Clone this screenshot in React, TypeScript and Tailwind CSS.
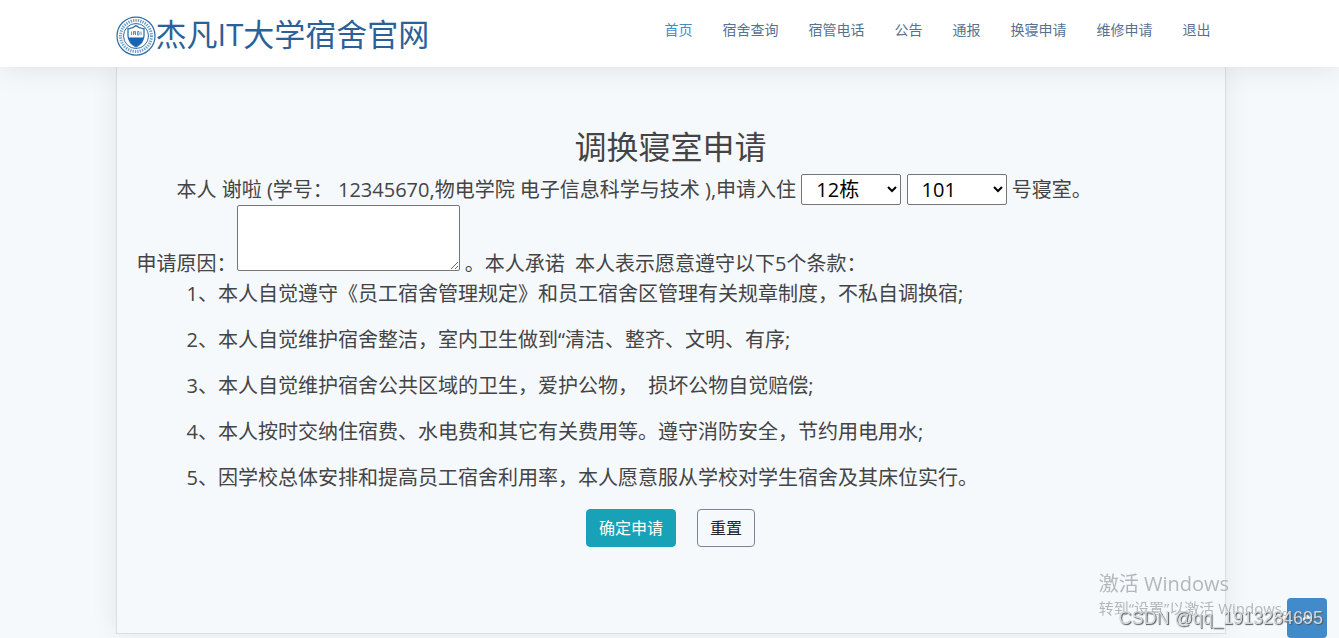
import { ChevronUp } from "lucide-react"

const navLinks = [
  "首页",
  "宿舍查询",
  "宿管电话",
  "公告",
  "通报",
  "换寝申请",
  "维修申请",
  "退出",
]

const terms = [
  "1、本人自觉遵守《员工宿舍管理规定》和员工宿舍区管理有关规章制度，不私自调换宿;",
  "2、本人自觉维护宿舍整洁，室内卫生做到“清洁、整齐、文明、有序;",
  "3、本人自觉维护宿舍公共区域的卫生，爱护公物，\u00a0 损坏公物自觉赔偿;",
  "4、本人按时交纳住宿费、水电费和其它有关费用等。遵守消防安全，节约用电用水;",
  "5、因学校总体安排和提高员工宿舍利用率，本人愿意服从学校对学生宿舍及其床位实行。",
]

function Emblem() {
  return (
    <svg viewBox="0 0 80 80" className="size-10 shrink-0" aria-hidden="true">
      <circle cx="40" cy="40" r="38" fill="#fff" stroke="#2f6fa8" strokeWidth="2.5" />
      <circle cx="40" cy="40" r="31" fill="none" stroke="#6d9dc6" strokeWidth="6" strokeDasharray="2.6 2.2" />
      <circle cx="40" cy="40" r="25" fill="#fff" stroke="#2f6fa8" strokeWidth="2" />
      <path d="M24 25q9 1 16-6q7 7 16 6v15q-1 14-16 22q-15-8-16-22z" fill="#fff" stroke="#2f6fa8" strokeWidth="2.5" />
      <path d="M25 43h30q-2 12-15 18q-13-6-15-18z" fill="#1764b5" />
      <path d="M31 31v7M35 38v-7h4v7M35 34h4M43 31v7M43 31h3v7h-3M50 31v7" fill="none" stroke="#2f6fa8" strokeWidth="1.5" />
    </svg>
  )
}

function Header() {
  return (
    <header className="relative z-10 bg-white pl-0.5 shadow-[0_0_30px_rgba(0,0,0,0.1)]">
      <div className="mx-auto flex h-[67px] max-w-[1110px] items-start justify-between">
        <a href="#" className="flex items-start pt-4 text-[#2a6199]">
          <Emblem />
          <span className="text-[31px] leading-9">杰凡IT大学宿舍官网</span>
        </a>
        <nav className="flex gap-[30px] pt-5 pr-[15px] text-sm">
          {navLinks.map((label, i) => (
            <a key={label} href="#" className={i === 0 ? "text-[#428bca]" : "text-[#56728f]"}>
              {label}
            </a>
          ))}
        </nav>
      </div>
    </header>
  )
}

export default function App() {
  return (
    <div className="min-h-screen overflow-hidden bg-[#f5f9fc] font-['Open_Sans','Noto_Sans_CJK_SC',sans-serif] text-[#444444]">
      <Header />
      <div className="pl-0.5">
        <main className="mx-auto max-w-[1110px] border-x border-b border-[#d9dee2] px-5 pt-15 pb-[86px] shadow-[0_0_25px_rgba(0,0,0,0.08)]">
          <form className="text-xl leading-[30px]">
            <h1 className="mb-[7px] text-center text-[32px] leading-10">调换寝室申请</h1>
            <p className="indent-10">
              本人 谢啦 (学号： 12345670,物电学院 电子信息科学与技术 ),申请入住{" "}
              <select
                aria-label="楼栋"
                className="h-[31px] w-[100px] rounded-xs border border-[#767676] bg-white px-[10px] indent-0 text-black"
              >
                <option>12栋</option>
              </select>{" "}
              <select
                aria-label="寝室"
                className="h-[31px] w-[100px] rounded-xs border border-[#767676] bg-white px-[10px] indent-0 text-black"
              >
                <option>101</option>
              </select>{" "}
              号寝室。
            </p>
            <div className="flex items-end">
              <label htmlFor="reason">申请原因：</label>
              <textarea
                id="reason"
                className="mb-2 h-[66px] w-[223px] rounded-xs border border-[#767676] bg-white p-0.5"
              />
              <span>&nbsp;。本人承诺&nbsp; 本人表示愿意遵守以下5个条款：</span>
            </div>
            <ul className="pl-[50px]">
              {terms.map((term) => (
                <li key={term} className="mb-4">
                  {term}
                </li>
              ))}
            </ul>
            <div className="flex justify-center gap-[21px] text-base leading-6">
              <button type="submit" className="h-[38px] rounded border border-[#17a2b8] bg-[#17a2b8] px-3 text-white">
                确定申请
              </button>
              <button type="reset" className="h-[38px] rounded border border-[#7d858d] px-3 text-[#212529]">
                重置
              </button>
            </div>
          </form>
        </main>
      </div>

      {/* 返回顶部 */}
      <a
        href="#"
        aria-label="返回顶部"
        className="fixed right-3 bottom-0 flex size-10 items-center justify-center rounded bg-[#428bca] text-white"
      >
        <ChevronUp size={18} strokeWidth={3} />
      </a>

      <div className="pointer-events-none fixed right-[42px] bottom-5 z-20 text-[#b3b7ba]">
        <p className="text-xl leading-7">激活 Windows</p>
        <p className="text-[15px] leading-5">转到“设置”以激活 Windows。</p>
      </div>
      <p className="pointer-events-none fixed right-4 bottom-2 z-20 font-['Liberation_Sans',sans-serif] text-lg leading-6 text-[#d5d8da] [text-shadow:1px_1px_1px_#555]">
        CSDN @qq_1913284695
      </p>
    </div>
  )
}
